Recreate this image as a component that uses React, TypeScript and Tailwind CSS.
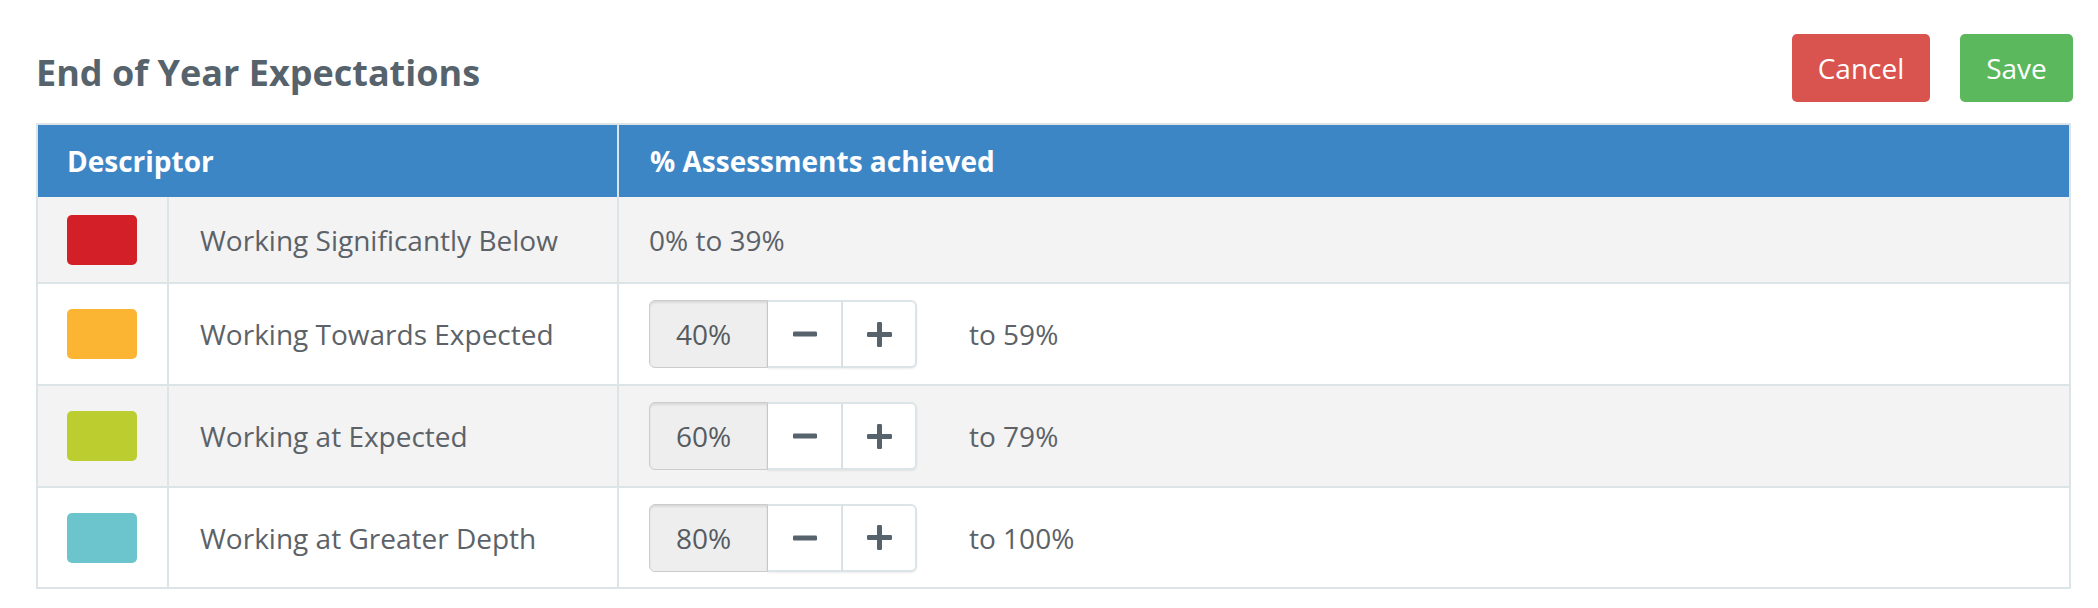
import React from "react";

type Band = {
  color: string;
  label: string;
  from: number | null;
  to: number;
  shaded: boolean;
};

const bands: Band[] = [
  { color: "bg-[#d31f27]", label: "Working Significantly Below", from: null, to: 39, shaded: true },
  { color: "bg-[#fbb532]", label: "Working Towards Expected", from: 40, to: 59, shaded: false },
  { color: "bg-[#bccd2f]", label: "Working at Expected", from: 60, to: 79, shaded: true },
  { color: "bg-[#6cc5cc]", label: "Working at Greater Depth", from: 80, to: 100, shaded: false },
];

const MinusIcon = () => (
  <svg width="24" height="6" viewBox="0 0 24 6" className="fill-[#56636c]">
    <rect x="0" y="0.5" width="24" height="5" rx="1.2" />
  </svg>
);

const PlusIcon = () => (
  <svg width="25" height="25" viewBox="0 0 25 25" className="fill-[#56636c]">
    <rect x="0" y="10" width="25" height="5" rx="1.2" />
    <rect x="10" y="0" width="5" height="25" rx="1.2" />
  </svg>
);

const Stepper: React.FC<{ value: number }> = ({ value }) => (
  <div className="flex h-[68px]">
    <div className="w-[119px] flex items-center pl-[26px] bg-[#eeeeee] border border-[#cccccc] rounded-l-[6px] shadow-[inset_0_2px_2px_rgba(0,0,0,0.09)] text-[#555b60]">
      {value}%
    </div>
    <button className="w-[75px] flex items-center justify-center bg-white border-2 border-l-0 border-[#dde4e7] shadow-[0_1px_2px_rgba(0,0,0,0.08)]">
      <MinusIcon />
    </button>
    <button className="w-[74px] flex items-center justify-center bg-white border-2 border-l-0 border-[#dde4e7] rounded-r-[6px] shadow-[0_1px_2px_rgba(0,0,0,0.08)]">
      <PlusIcon />
    </button>
  </div>
);

export default function App() {
  return (
    <div className="w-[2098px] min-h-[608px] bg-white pl-[36px] pr-[25px] pt-[34px] font-['Open_Sans',sans-serif] text-[28px] text-[#5c6268]">
      <div className="flex justify-between items-start">
        <h1 className="mt-[14px] text-[36px] leading-[49px] font-bold text-[#56636c]">
          End of Year Expectations
        </h1>
        <div className="flex gap-[30px]">
          <button className="w-[138px] h-[68px] rounded-[5px] bg-[#d9534f] text-white text-[28px]">
            Cancel
          </button>
          <button className="w-[113px] h-[68px] rounded-[5px] bg-[#5cb85c] text-white text-[28px]">
            Save
          </button>
        </div>
      </div>

      <div className="mt-[21px] mr-[2px] border-2 border-[#dde4e7]">
        <div className="grid grid-cols-[579px_1fr] h-[72px] bg-[#3d86c6] text-white font-bold">
          <div className="flex items-center pl-[29px]">Descriptor</div>
          <div className="flex items-center pl-[31px] border-l-2 border-[#dde4e7]">% Assessments achieved</div>
        </div>
        {bands.map((b, i) => {
          const last = i === bands.length - 1;
          return (
            <div
              key={b.label}
              className={`grid grid-cols-[129px_450px_1fr] ${i === 0 ? "h-[87px]" : last ? "h-[99px]" : "h-[102px]"} ${
                last ? "" : "border-b-2 border-[#dde4e7]"
              } ${b.shaded ? "bg-[#f3f3f3]" : "bg-white"}`}
            >
              <div className="flex items-center pl-[29px]">
                <div className={`w-[70px] h-[50px] rounded-[5px] ${b.color}`} />
              </div>
              <div className="flex items-center pl-[31px] border-l-2 border-[#dde4e7]">{b.label}</div>
              <div className="flex items-center pl-[30px] border-l-2 border-[#dde4e7]">
                {b.from === null ? (
                  <span>0% to {b.to}%</span>
                ) : (
                  <>
                    <Stepper value={b.from} />
                    <span className="ml-[52px]">to {b.to}%</span>
                  </>
                )}
              </div>
            </div>
          );
        })}
      </div>
    </div>
  );
}
